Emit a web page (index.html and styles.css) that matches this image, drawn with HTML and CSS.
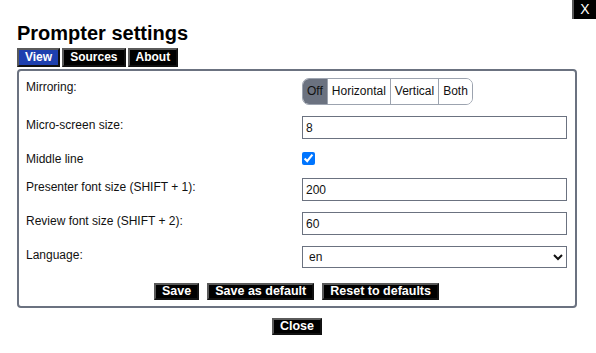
FILE: index.html
```html
<!DOCTYPE html>
<html lang="en">
<head>
<meta charset="utf-8">
<title>Prompter settings</title>
<link rel="stylesheet" href="styles.css">
</head>
<body>
<button class="btn close-x">X</button>
<div class="dialog">
  <h1 class="title">Prompter settings</h1>
  <div class="tabs">
    <button class="tab active">View</button>
    <button class="tab">Sources</button>
    <button class="tab">About</button>
  </div>
  <div class="panel">
    <div class="form">
      <div class="label">Mirroring:</div>
      <div class="control">
        <div class="seg">
          <button class="seg-item on">Off</button>
          <button class="seg-item">Horizontal</button>
          <button class="seg-item">Vertical</button>
          <button class="seg-item">Both</button>
        </div>
      </div>

      <div class="label">Micro-screen size:</div>
      <div class="control"><input class="field" type="text" value="8"></div>

      <div class="label">Middle line</div>
      <div class="control check-row"><input class="check" type="checkbox" checked></div>

      <div class="label">Presenter font size (SHIFT + 1):</div>
      <div class="control"><input class="field" type="text" value="200"></div>

      <div class="label">Review font size (SHIFT + 2):</div>
      <div class="control"><input class="field" type="text" value="60"></div>

      <div class="label">Language:</div>
      <div class="control">
        <select class="select"><option>en</option></select>
      </div>
    </div>
    <div class="actions">
      <button class="btn">Save</button>
      <button class="btn">Save as default</button>
      <button class="btn">Reset to defaults</button>
    </div>
  </div>
  <div class="footer">
    <button class="btn">Close</button>
  </div>
</div>
</body>
</html>
```

FILE: styles.css
```css
html, body {
  margin: 0;
  padding: 0;
  background: #fff;
}
body {
  font-family: "Liberation Sans", Arial, sans-serif;
  color: #111;
  width: 596px;
  height: 353px;
  overflow: hidden;
  position: relative;
}
.dialog {
  padding: 21px 19px 0 17px;
}
.title {
  margin: 0;
  font-size: 20px;
  line-height: 24px;
  font-weight: bold;
  color: #000;
}
.btn, .tab {
  font-family: "Liberation Sans", Arial, sans-serif;
  font-weight: bold;
  color: #fff;
  background: #000;
  border-style: solid;
  border-width: 2px;
  border-color: #5a5a5a #111 #111 #5a5a5a;
  margin: 0;
  cursor: pointer;
}
.close-x {
  position: absolute;
  top: 0;
  right: 0;
  width: 24px;
  height: 19px;
  padding: 0;
  font-size: 14px;
  font-weight: normal;
  line-height: 15px;
  border-color: #5a5a5a #000 #000 #5a5a5a;
  border-width: 0 0 0 2px;
}
.tabs {
  display: flex;
  gap: 2px;
  margin-top: 3px;
}
.tab {
  font-size: 12px;
  line-height: 15px;
  padding: 0 6px;
}
.tab.active {
  background: #1e40af;
}
.panel {
  margin-top: 2px;
  border: 2px solid #6b7280;
  border-radius: 4px;
  padding: 7px 8px 6px 7px;
}
.form {
  display: grid;
  grid-template-columns: 1fr 265px;
  row-gap: 11px;
  align-items: start;
}
.label {
  font-size: 12px;
  line-height: 14px;
  padding-top: 2px;
}
.control {
  display: flex;
}
.seg {
  display: inline-flex;
  border: 1px solid #9ca3af;
  border-radius: 7px;
  overflow: hidden;
}
.seg-item {
  font-family: "Liberation Sans", Arial, sans-serif;
  font-size: 12px;
  line-height: 13px;
  padding: 6px 4px;
  margin: 0;
  border: 0;
  border-left: 1px solid #9ca3af;
  background: #fff;
  color: #111;
}
.seg-item:first-child {
  border-left: 0;
}
.seg-item.on {
  background: #6b7280;
}
.field {
  box-sizing: border-box;
  width: 100%;
  height: 23px;
  margin: 0;
  border: 1px solid #6b7280;
  border-radius: 0;
  padding: 0 3px;
  font-family: "Liberation Sans", Arial, sans-serif;
  font-size: 12px;
  color: #111;
  outline: none;
}
.check-row {
  height: 17px;
  align-items: center;
}
.check {
  width: 13px;
  height: 13px;
  margin: 0;
}
.select {
  box-sizing: border-box;
  width: 100%;
  height: 22px;
  margin: 0;
  border: 1px solid #6b7280;
  border-radius: 0;
  background: #fff;
  padding: 0 2px;
  font-family: "Liberation Sans", Arial, sans-serif;
  font-size: 12px;
  color: #111;
}
.actions {
  display: flex;
  justify-content: center;
  gap: 8px;
  margin-top: 15px;
}
.actions .btn, .footer .btn {
  font-size: 12.5px;
  line-height: 13px;
  padding: 0 6px;
}
.footer {
  display: flex;
  justify-content: center;
  margin-top: 10px;
}
```
